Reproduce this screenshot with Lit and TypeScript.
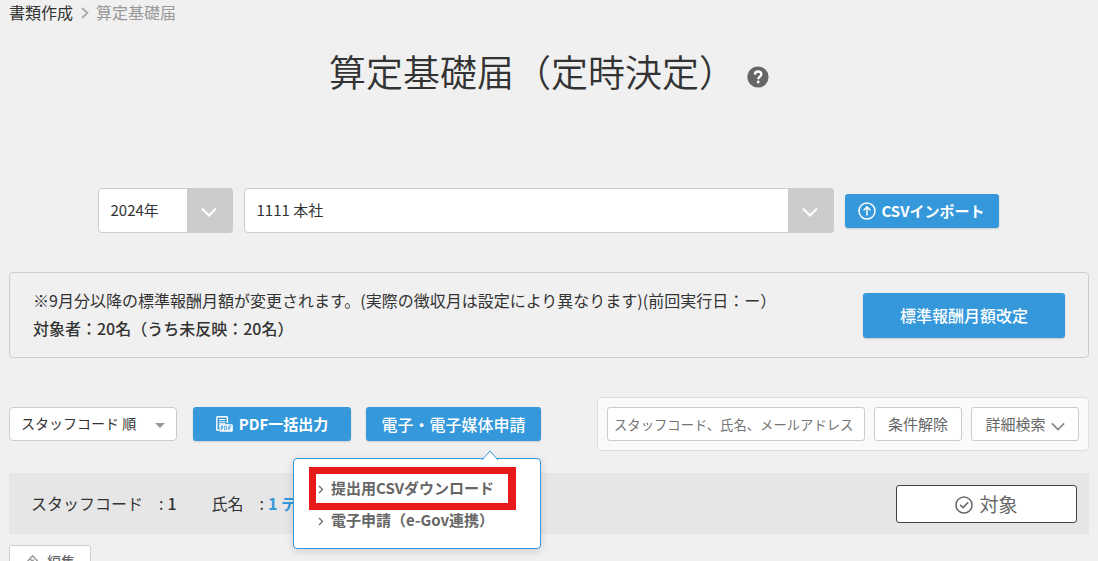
import { LitElement, html, css, svg } from "lit";
import { customElement, state } from "lit/decorators.js";

const chevronDown = svg`<path d="M1 1.5 L8 8.5 L15 1.5" fill="none" stroke="currentColor" stroke-width="2"/>`;

@customElement("app-root")
export class AppRoot extends LitElement {
  static styles = css`
    :host {
      display: block;
      min-height: 100vh;
      background: #f0f0f0;
      color: #333;
      font: 400 16px/24px "Noto Sans CJK JP", "Noto Sans", sans-serif;
    }
    * { box-sizing: border-box; }
    svg { display: block; flex: none; }
    a { color: inherit; text-decoration: none; }
    button, select { font: inherit; color: inherit; margin: 0; cursor: pointer; }
    .page { height: 100vh; overflow: hidden; padding: 0 9px; }

    .crumbs { display: flex; align-items: center; }
    .crumbs svg { margin: 2px 7px 0 8px; color: #aaa; }
    .crumbs .current { color: #999; }

    .heading { display: flex; justify-content: center; align-items: center; padding-top: 19px; }
    h1 { margin: 0; font-size: 37px; line-height: 56px; font-weight: 350; }
    .help { border: 0; padding: 0; margin: 12px 0 0 11px; background: none; }

    .filters { display: flex; justify-content: center; align-items: center; gap: 11px; padding: 89px 90px 0 88px; }
    .pick { display: grid; }
    .pick > * { grid-area: 1 / 1; }
    .pick.year { width: 135px; }
    .pick.office { flex: 0 1 590px; }
    .pick select {
      appearance: none;
      width: 100%;
      height: 45px;
      padding: 0 56px 2px 12px;
      font-size: 15px;
      border: 1px solid #ccc;
      border-radius: 4px;
      background: #fff;
    }
    .pick .arrow {
      justify-self: end;
      display: flex;
      align-items: center;
      justify-content: center;
      width: 46px;
      padding: 3px 2px 0 0;
      background: #ccc;
      color: #fff;
      border-radius: 0 4px 4px 0;
      pointer-events: none;
    }

    .primary {
      display: flex;
      align-items: center;
      justify-content: center;
      border: 0;
      border-radius: 3px;
      background: #3498db;
      color: #fff;
      height: 34px;
      padding: 0;
      box-shadow: 0 1px 2px rgba(0, 0, 0, 0.15);
      white-space: nowrap;
    }
    .strong { font-size: 15px; font-weight: 700; }
    .import { width: 154px; gap: 5px; }
    .pdf { width: 158px; gap: 6px; }
    .media { width: 175px; font-weight: 500; }
    .revise { width: 202px; height: 45px; font-weight: 500; }

    .notice {
      display: flex;
      align-items: center;
      justify-content: space-between;
      gap: 24px;
      margin-top: 39px;
      padding: 13px 23px 15px;
      border: 1px solid #ccc;
      border-radius: 4px;
    }
    .notice p { margin: 0; line-height: 28px; }
    .notice .count { font-weight: 500; }
    .notice .revise { margin-top: 2px; }

    .toolbar { display: flex; align-items: center; margin-top: 39px; }
    .sort { width: 168px; margin-right: 16px; }
    .sort select { height: 34px; padding: 0 28px 2px 11px; font-size: 14px; }
    .sort svg { justify-self: end; align-self: center; margin: 3px 12px 0 0; color: #999; pointer-events: none; }
    .menu-host { position: relative; margin-left: 15px; }

    .menu {
      position: absolute;
      top: 51px;
      right: 0;
      z-index: 2;
      width: 248px;
      padding: 16px 24px 12px;
      border: 1px solid #3498db;
      border-radius: 4px;
      background: #fff;
      box-shadow: 0 2px 8px rgba(0, 0, 0, 0.15);
      color: #666;
      font-size: 15px;
      font-weight: 700;
      line-height: 26px;
    }
    .menu ul { list-style: none; margin: 0; padding: 0; display: grid; gap: 6px; padding-bottom: 3px; }
    .menu a { display: flex; align-items: center; gap: 7px; white-space: nowrap; }
    .menu a svg { margin-top: 2px; }
    .menu .tip { position: absolute; top: -9px; right: 41px; }
    .menu .mark {
      position: absolute;
      top: 8px;
      left: 15px;
      width: 207px;
      height: 43px;
      border: 7px solid #e71a1a;
      border-right-width: 8px;
      pointer-events: none;
    }

    .search {
      display: flex;
      align-items: center;
      gap: 9px;
      margin-left: auto;
      padding: 9px;
      border: 1px solid #ddd;
      border-radius: 4px;
      background: #fafafa;
    }
    .search input {
      width: 258px;
      height: 34px;
      padding: 0 6px;
      border: 1px solid #ccc;
      border-radius: 3px;
      background: #fff;
      color: #333;
      font-family: inherit;
    }
    .search input::placeholder { color: #757575; }
    .plain {
      display: flex;
      align-items: center;
      justify-content: center;
      gap: 5px;
      height: 34px;
      padding: 0;
      border: 1px solid #ccc;
      border-radius: 3px;
      background: #fff;
      color: #666;
      font-size: 15px;
      white-space: nowrap;
    }
    .clear { width: 88px; }
    .detail { width: 108px; }
    .detail svg { margin-top: 4px; color: #888; }

    .staff {
      display: flex;
      align-items: center;
      gap: 35px;
      margin-top: 22px;
      padding: 12px 12px 11px 22px;
      background: #e6e6e6;
      white-space: pre;
    }
    .staff span { padding-bottom: 2px; }
    .staff b { font-weight: 500; margin-left: 4px; }
    .staff a { font-weight: 700; color: #3498db; margin-left: 4px; }
    .target {
      width: 181px;
      height: 38px;
      margin-left: auto;
      gap: 6px;
      border-color: #444;
      font-size: 19px;
      padding-bottom: 1px;
    }
    .target svg { margin-top: 3px; }
    .edit { width: 82px; margin-top: 11px; padding-bottom: 2px; gap: 8px; font-size: 14px; font-weight: 500; }
    .edit svg { color: #999; }
  `;

  @state() private menuOpen = true;

  private toggleMenu() {
    this.menuOpen = !this.menuOpen;
  }

  private renderMenu() {
    const items = ["提出用CSVダウンロード", "電子申請（e-Gov連携）"];
    return html`
      <div class="menu">
        <svg class="tip" width="18" height="10" viewBox="0 0 18 10">
          <path d="M1 10 L9 1 L17 10" fill="#fff" stroke="#3498db" />
        </svg>
        <ul>
          ${items.map(
            (text) => html`<li>
              <a href="#"><svg width="6" height="9" viewBox="0 0 6 9"><path d="M1 1 L4.5 4.5 L1 8" fill="none" stroke="#666" stroke-width="1.2" /></svg>${text}</a>
            </li>`
          )}
        </ul>
        <div class="mark"></div>
      </div>
    `;
  }

  render() {
    return html`
      <div class="page" lang="ja">
        <nav class="crumbs">
          <a href="#">書類作成</a>
          <svg width="8" height="12" viewBox="0 0 8 12"><path d="M1 1 L6.5 6 L1 11" fill="none" stroke="currentColor" stroke-width="1.8" /></svg>
          <span class="current">算定基礎届</span>
        </nav>

        <header class="heading">
          <h1>算定基礎届（定時決定）</h1>
          <button class="help" aria-label="ヘルプ">
            <svg width="22" height="22" viewBox="0 0 22 22">
              <circle cx="11" cy="11" r="10.6" fill="#666" />
              <path d="M7.9 8.6 C8 6.5 9.3 5.5 11.1 5.5 C13 5.5 14.3 6.6 14.3 8.2 C14.3 10.5 11.2 10.7 11.2 13.2" fill="none" stroke="#fff" stroke-width="2.3" />
              <circle cx="11.2" cy="16" r="1.4" fill="#fff" />
            </svg>
          </button>
        </header>

        <div class="filters">
          <div class="pick year">
            <select aria-label="年"><option>2024年</option></select>
            <span class="arrow"><svg width="16" height="10" viewBox="0 0 16 10">${chevronDown}</svg></span>
          </div>
          <div class="pick office">
            <select aria-label="事業所"><option>1111 本社</option></select>
            <span class="arrow"><svg width="16" height="10" viewBox="0 0 16 10">${chevronDown}</svg></span>
          </div>
          <button class="primary strong import">
            <svg width="18" height="18" viewBox="0 0 18 18" fill="none" stroke="#fff" stroke-width="1.5">
              <circle cx="9" cy="9" r="8" />
              <path d="M9 13.5 V5 M5.6 8.3 L9 4.9 L12.4 8.3" />
            </svg>
            CSVインポート
          </button>
        </div>

        <section class="notice">
          <div>
            <p>※9月分以降の標準報酬月額が変更されます。(実際の徴収月は設定により異なります)(前回実行日：ー）</p>
            <p class="count">対象者：20名（うち未反映：20名）</p>
          </div>
          <button class="primary revise">標準報酬月額改定</button>
        </section>

        <div class="toolbar">
          <div class="pick sort">
            <select aria-label="並び順"><option>スタッフコード 順</option></select>
            <svg width="10" height="5" viewBox="0 0 10 5"><path d="M0 0 H10 L5 5 Z" fill="currentColor" /></svg>
          </div>
          <button class="primary strong pdf">
            <svg width="17" height="16" viewBox="0 0 17 16" fill="none" stroke="#fff">
              <path d="M3 14.2 H1.6 Q0.8 14.2 0.8 13.4 V1.6 Q0.8 0.8 1.6 0.8 H10.6 Q11.4 0.8 11.4 1.6 V7" stroke-width="1.4" />
              <path d="M3 3.5 H9.4 M3 5.7 H9.4 M3 7.9 H9.4 M3 10.1 H3.8" stroke-width="1.1" />
              <path d="M4.4 8.2 H15.6 Q16.8 8.2 16.8 9.4 V14.6 Q16.8 15.8 15.6 15.8 H4.4 Q3.4 15.8 3.4 14.6 V9.4 Q3.4 8.2 4.4 8.2 Z" fill="#fff" stroke="none" />
              <path d="M5.2 14.4 V10 H6.8 V12.3 H5.2 M8.7 10 V14 H9.9 L10.8 13 V11 L9.9 10 Z M12.8 14.4 V10 H15.4 M12.8 12 H15" stroke="#3498db" stroke-width="0.9" />
            </svg>
            PDF一括出力
          </button>
          <div class="menu-host">
            <button class="primary media" @click=${this.toggleMenu}>電子・電子媒体申請</button>
            ${this.menuOpen ? this.renderMenu() : null}
          </div>
          <form class="search" @submit=${(e: Event) => e.preventDefault()}>
            <input type="text" aria-label="検索" placeholder="スタッフコード、氏名、メールアドレス" />
            <button type="button" class="plain clear">条件解除</button>
            <button type="button" class="plain detail">
              詳細検索
              <svg width="14" height="9" viewBox="0 0 16 10">${chevronDown}</svg>
            </button>
          </form>
        </div>

        <section class="staff"><span>スタッフコード　:<b>1</b></span><span>氏名　:<a href="#">1 テ</a></span><button class="plain target"><svg width="18" height="18" viewBox="0 0 18 18" fill="none" stroke="#666" stroke-width="1.5"><circle cx="9" cy="9" r="8" /><path d="M5 8.8 L8 11.6 L13.2 6.2" /></svg>対象</button></section>

        <button class="plain edit">
          <svg width="14" height="14" viewBox="0 0 14 14" fill="none" stroke="currentColor" stroke-width="1.4">
            <path d="M1.5 8.5 L7.5 1.8 L12.2 6.4 L6 13 H1.5 Z M5.2 5 L9.6 9.4 M4.6 10 L8.8 5.6" />
          </svg>
          編集
        </button>
      </div>
    `;
  }
}
